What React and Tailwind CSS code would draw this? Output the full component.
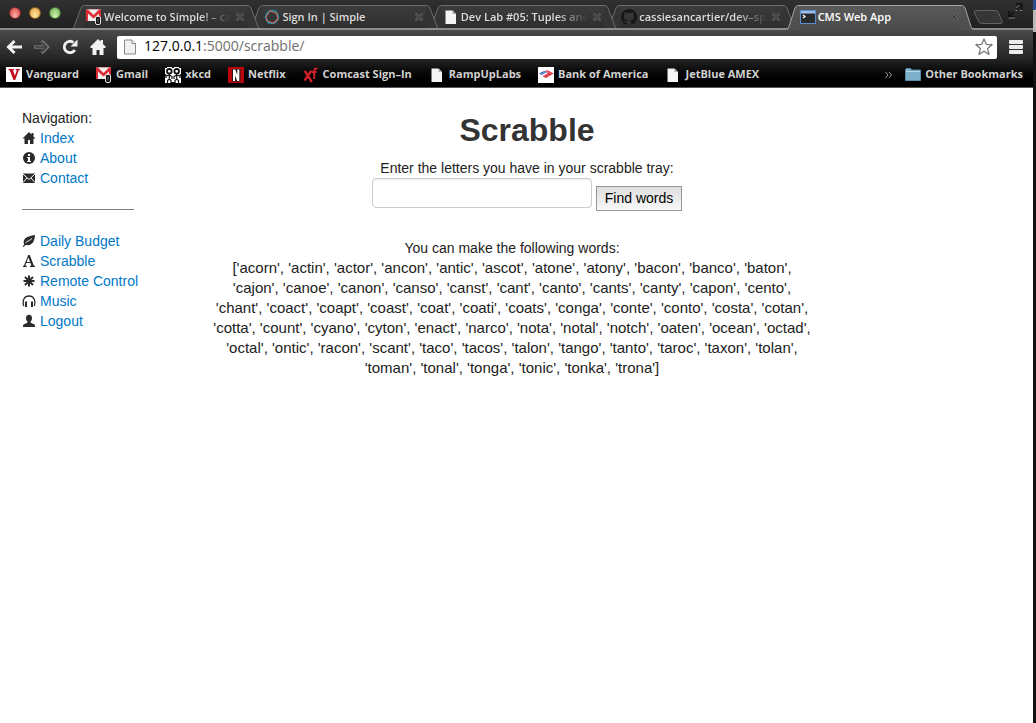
import React from "react";

function MailIcon() {
  return (
    <svg className="size-4 shrink-0" viewBox="0 0 16 16" aria-hidden="true">
      <rect x="0" y="0.500" width="15" height="11.500" fill="#f1eeee" />
      <path d="M0 .5h15V12h-2V4.500L7.500 9.500 2 4.500V12H0z" fill="#dc2b34" />
      <path d="M1.800.5h11.400L7.500 6z" fill="#f1eeee" />
      <rect x="9.500" y="7.500" width="5" height="8" rx="1.500" fill="#111" stroke="#e2e2e2" />
      <path d="M12 9.500v4" stroke="#777" />
    </svg>
  );
}

function PageIcon() {
  return (
    <svg className="size-4 shrink-0" viewBox="0 0 16 16" aria-hidden="true">
      <path d="M2.500 1.500h7L13 5v10H2.500z" fill="#f4f4f4" />
      <path d="M9.500 1.500V5H13z" fill="#aaa" />
    </svg>
  );
}

function SimpleIcon() {
  return (
    <svg className="size-4 shrink-0" viewBox="0 0 16 16" fill="none" strokeLinejoin="round" aria-hidden="true">
      <path d="M5 2h6.500L14.500 8l-3.500 6H4.500L1.500 8z" stroke="#12809a" strokeWidth="1.800" />
      <path d="M8 1.300 13.700 4.500v6.800L8 14.700l-5.700-3.400V4.500z" stroke="#1d93a8" strokeWidth="1.200" />
      <path d="M2 7.500 6 2l6.500 2 1.500 6-4.500 4L3 12z" stroke="#d8604f" strokeWidth="1.100" />
    </svg>
  );
}

function OctocatIcon() {
  return (
    <svg className="size-4 shrink-0" viewBox="0 0 16 16" fill="#171717" aria-hidden="true">
      <path d="M8 0C3.580 0 0 3.580 0 8c0 3.540 2.290 6.530 5.470 7.590.4.070.55-.17.55-.38 0-.19-.01-.82-.01-1.490-2.010.37-2.530-.49-2.690-.94-.09-.23-.48-.94-.82-1.130-.28-.15-.68-.52-.01-.53.63-.01 1.080.58 1.230.82.72 1.210 1.870.87 2.330.66.07-.52.28-.87.51-1.070-1.780-.2-3.640-.89-3.640-3.950 0-.87.31-1.590.82-2.150-.08-.2-.36-1.020.08-2.120 0 0 .67-.21 2.200.82a7.600 7.600 0 0 1 4 0c1.530-1.040 2.200-.82 2.200-.82.44 1.100.16 1.920.08 2.120.51.56.82 1.270.82 2.150 0 3.070-1.870 3.750-3.650 3.950.29.25.54.73.54 1.480 0 1.070-.01 1.930-.01 2.200 0 .21.15.46.55.38A8.010 8.010 0 0 0 16 8c0-4.420-3.580-8-8-8z" />
    </svg>
  );
}

function ConsoleIcon() {
  return (
    <svg className="size-4 shrink-0" viewBox="0 0 16 16" aria-hidden="true">
      <rect x="0.500" y="1.500" width="15" height="13" fill="#2a2c30" stroke="#5b8ccb" />
      <rect x="1" y="2" width="14" height="2.500" fill="#9cc0ee" />
      <path d="M3 6 5 7.500 3 9" fill="none" stroke="#fff" strokeWidth="1.200" />
    </svg>
  );
}

function VanguardIcon() {
  return (
    <svg className="size-4 shrink-0" viewBox="0 0 16 16" aria-hidden="true">
      <rect width="16" height="15" fill="#fff" />
      <path d="M2.500 2H8v1l-1 .3 1.900 5.500 1.900-5.500L9.800 3V2h4v1l-1 .3L9.200 13H7.500L3.700 3.300 2.500 3z" fill="#c20e1a" />
    </svg>
  );
}

function XkcdIcon() {
  return (
    <svg className="size-4 shrink-0" viewBox="0 0 16 16" aria-hidden="true">
      <rect width="16" height="16" fill="#fff" />
      <path d="M0 0h2v1H0zM14 0h2v1h-2zM0 7h1v2H0zM15 7h1v2h-1zM7 0h2v1H7zM6 15h4v1H6z" fill="#111" />
      <g fill="none" stroke="#111">
        <circle cx="4.300" cy="4.300" r="2.300" strokeWidth="1.800" />
        <circle cx="11.700" cy="4.300" r="2.300" strokeWidth="1.800" />
        <path d="M4.300 7v5M11.700 7v5M1 11V9l3.300-1L7 9.500V12M9 12V9.500L11.700 8 15 9v2M2.500 16v-2.500l1.800-1.500L6 13.500V16M10 16v-2.500l1.700-1.500 1.800 1.500V16" strokeWidth="1.200" />
      </g>
    </svg>
  );
}

function NetflixIcon() {
  return (
    <svg className="size-4 shrink-0" viewBox="0 0 16 16" aria-hidden="true">
      <rect width="16" height="16" fill="#b8060f" />
      <path d="M4 2h8.500v12.500H4z" fill="#2c1515" />
      <path d="M5 2.500h2.200L9.300 8V2.500h2V14H9.200L7 8.500V14H5z" fill="#fff" />
    </svg>
  );
}

function XfinityIcon() {
  return (
    <svg className="size-4 shrink-0" viewBox="0 0 16 16" fill="none" stroke="#d2202a" aria-hidden="true">
      <path d="M1.800 3.800 8.800 15M8.300 3.800 1.500 13.500" strokeWidth="2.400" />
      <path d="M14.500 1.600c-2.500-.5-3.300.4-3.300 2.400v8M9 5h4.500" strokeWidth="2" />
    </svg>
  );
}

function BankIcon() {
  return (
    <svg className="size-4 shrink-0" viewBox="0 0 16 16" aria-hidden="true">
      <rect width="16" height="16" fill="#fff" />
      <path d="M1 6.500 6 4l3 1-5.500 3z" fill="#2861b8" />
      <path d="M7 4 9.500 3.200l6 3.300-7.500 4.500-3.500-2 5.500-3z" fill="#d8202f" />
      <path d="m2.500 6 6 3.300M5 5l6 3.500M8.500 4l5 3" stroke="#fff" strokeWidth="0.500" />
    </svg>
  );
}

function FolderIcon() {
  return (
    <svg className="size-4 shrink-0" viewBox="0 0 16 16" aria-hidden="true">
      <path d="M0.500 13.500V2.500l1-1h4l1 1.500h9v10.500z" fill="#7eafc9" stroke="#5b8dab" />
      <path d="M1 4.500h14" stroke="#b9d8e8" />
    </svg>
  );
}

function ActiveTabEdge({ flip }) {
  return (
    <svg
      className={flip ? "h-[25px] w-3 shrink-0 -scale-x-100" : "h-[25px] w-3 shrink-0"}
      viewBox="0 0 12 25"
      aria-hidden="true"
    >
      <path d="M0 25Q1.500 24 2 22L8 3Q9 .5 12 .5V25z" fill="#505050" />
      <path d="M0 24Q1.300 23.500 2 21.500L8 3Q9 .5 12 .5" fill="none" stroke="#a8a8a8" />
    </svg>
  );
}

function TabEdge({ flip }) {
  return (
    <svg
      className={flip ? "h-[23px] w-3 shrink-0 -scale-x-100" : "h-[23px] w-3 shrink-0"}
      viewBox="0 0 12 23"
      aria-hidden="true"
    >
      <path d="M.5 23 8 3Q9 .5 12 .5V23z" fill="#343434" />
      <path d="M.5 23 8 3Q9 .5 12 .5" fill="none" stroke="#6c6c6c" />
    </svg>
  );
}

function Tab({ icon, title, active, fade }) {
  const Edge = active ? ActiveTabEdge : TabEdge;
  return (
    <div className={active ? "relative z-10 -mr-2 flex min-w-0 flex-1" : "-mr-2 flex min-w-0 flex-1"}>
      <Edge />
      <div
        className={
          active
            ? "flex h-[25px] min-w-0 flex-1 items-center border-t border-[#a8a8a8] bg-linear-to-b from-[#5a5a5a] to-[#4a4a4a] pb-0.5"
            : "flex h-[23px] min-w-0 flex-1 items-center border-t border-[#6c6c6c] bg-linear-to-b from-[#3c3c3c] to-[#2e2e2e]"
        }
      >
        <button
          type="button"
          className={
            active
              ? "flex min-w-0 flex-1 items-center gap-0.5 pl-px text-white"
              : "flex min-w-0 flex-1 items-center gap-0.5 pl-px text-[#dcdcdc]"
          }
        >
          {icon}
          <span
            className={
              fade
                ? "min-w-0 flex-1 overflow-hidden text-left whitespace-nowrap mask-r-from-75% mask-r-to-100%"
                : "min-w-0 flex-1 overflow-hidden text-left whitespace-nowrap"
            }
          >
            {title}
          </span>
        </button>
        <button type="button" aria-label="Close tab" className="mr-0.5 ml-1 shrink-0">
          <svg className="size-2.5" viewBox="0 0 10 10" fill="none" aria-hidden="true">
            <path d="m1.500 1.500 7 7m0-7-7 7" stroke="#777" strokeWidth="2.400" />
            <path d="m1.500 1.500 7 7m0-7-7 7" stroke="#3a3a3a" strokeWidth="1.200" />
          </svg>
        </button>
      </div>
      <Edge flip />
    </div>
  );
}

const tabs = [
  { title: "Welcome to Simple! – caro", icon: <MailIcon />, fade: true },
  { title: "Sign In | Simple", icon: <SimpleIcon /> },
  { title: "Dev Lab #05: Tuples and", icon: <PageIcon />, fade: true },
  { title: "cassiesancartier/dev–spr", icon: <OctocatIcon />, fade: true },
  { title: "CMS Web App", icon: <ConsoleIcon />, active: true },
];

const bookmarks = [
  { title: "Vanguard", icon: <VanguardIcon /> },
  { title: "Gmail", icon: <MailIcon /> },
  { title: "xkcd", icon: <XkcdIcon /> },
  { title: "Netflix", icon: <NetflixIcon /> },
  { title: "Comcast Sign–In", icon: <XfinityIcon /> },
  { title: "RampUpLabs", icon: <PageIcon /> },
  { title: "Bank of America", icon: <BankIcon /> },
  { title: "JetBlue AMEX", icon: <PageIcon /> },
];

function TitleBar() {
  return (
    <div className="flex h-[30px] border-b-2 border-[#8c8c8c] bg-linear-to-b from-[#303030] to-[#202020] text-[11px] font-semibold">
      <div className="flex w-[73px] shrink-0 gap-2 pt-[7px] pl-[9px]">
        <button type="button" aria-label="Close window" className="size-3 rounded-full border border-[#7c2a2a] bg-radial-[at_50%_80%] from-[#ffb0a8] to-[#d63c3c]" />
        <button type="button" aria-label="Minimize window" className="size-3 rounded-full border border-[#8a5a20] bg-radial-[at_50%_80%] from-[#ffe9a0] to-[#e09838]" />
        <button type="button" aria-label="Zoom window" className="size-3 rounded-full border border-[#3f6e35] bg-radial-[at_50%_80%] from-[#d0f5b0] to-[#6aac50]" />
      </div>
      <div className="flex min-w-0 flex-1 items-start pt-[5px] pr-2">
        {tabs.map((tab) => (
          <Tab key={tab.title} {...tab} />
        ))}
      </div>
      <button type="button" aria-label="New tab" className="mt-[9px] h-4 w-[31px] shrink-0">
        <svg className="h-4 w-[31px]" viewBox="0 0 31 16" aria-hidden="true">
          <path d="M2.500 1.500h20q2 0 3 2.500l3.500 8q1 2.500-1.500 2.500H8.500q-2 0-3-2.500L1.500 4Q.5 1.500 2.500 1.500z" fill="#363636" stroke="#626262" />
        </svg>
      </button>
      <button type="button" aria-label="Full screen" className="mt-[3px] mr-2.5 ml-1 h-4 w-[15px] shrink-0">
        <svg className="h-4 w-[15px]" viewBox="0 0 15 16" fill="none" aria-hidden="true">
          <path d="M8 1h6v6M13.500 1.500 9 6M1 8v6h6M1.500 13.500 6 9" stroke="#111" strokeWidth="1.600" />
          <path d="M7.500 7.500h2M12 7.500h2.500M.5 15H7M8.500 5l3-3" stroke="#808080" />
        </svg>
      </button>
    </div>
  );
}

function Toolbar() {
  return (
    <div className="flex h-[30px] items-center bg-linear-to-b from-[#4a4a4a] to-[#242424] pt-1 pr-2.5 pl-1.5">
      <button type="button" aria-label="Back" className="mr-3">
        <svg className="size-4" viewBox="0 0 16 16" fill="none" stroke="#f2f2f2" strokeWidth="3" aria-hidden="true">
          <path d="M2.500 8H16M8.500 2 2.500 8l6 6" />
        </svg>
      </button>
      <button type="button" aria-label="Forward" className="mr-3">
        <svg className="size-4" viewBox="0 0 16 16" fill="none" aria-hidden="true">
          <path d="M0 8h13.500M7.500 2l6 6-6 6" stroke="#747474" strokeWidth="3.400" />
          <path d="M1 8h12M7.500 3l5 5-5 5" stroke="#3c3c3c" strokeWidth="1.600" />
        </svg>
      </button>
      <button type="button" aria-label="Reload" className="mr-3">
        <svg className="size-4" viewBox="0 0 16 16" fill="none" aria-hidden="true">
          <path d="M12.800 11A5.700 5.700 0 1 1 11.500 3.500" stroke="#f2f2f2" strokeWidth="2.800" />
          <path d="M15.500.5v7h-7z" fill="#f2f2f2" />
        </svg>
      </button>
      <button type="button" aria-label="Home" className="mr-[11px]">
        <svg className="size-4" viewBox="0 0 16 16" fill="#f2f2f2" aria-hidden="true">
          <path d="M8 0 0 8l1 1h1.500v7h4v-5h3v5h4V9H15l1-1-3-3V1h-2.500v1.500z" />
        </svg>
      </button>
      <div className="flex h-[23px] flex-1 items-center rounded-xs bg-white pr-1 pl-1.5">
        <svg className="h-4 w-[14px]" viewBox="0 0 14 16" aria-hidden="true">
          <path d="M1.500 1h7.500l3.500 3.500V15h-11z" fill="#f0f0f0" stroke="#8a8a8a" />
          <path d="M9 1v3.500h3.500" fill="#fff" stroke="#8a8a8a" />
        </svg>
        <a href="http://127.0.0.1:5000/scrabble/" className="ml-[7px] flex-1 pb-0.5 text-sm leading-5 text-[#6e6e6e]">
          <span className="text-black">127.0.0.1</span>:5000/scrabble/
        </a>
        <button type="button" aria-label="Bookmark this page">
          <svg className="size-[18px]" viewBox="0 0 20 20" fill="#fff" stroke="#777" strokeWidth="1.400" strokeLinejoin="round" aria-hidden="true">
            <path d="m10 1 2.500 6 6.500.5-5 4.200 1.600 6.500L10 14.800l-5.600 3.400L6 11.700 1 7.500 7.500 7z" />
          </svg>
        </button>
      </div>
      <button type="button" aria-label="Menu" className="ml-3">
        <svg className="h-4 w-3.5" viewBox="0 0 14 16" fill="#ececec" aria-hidden="true">
          <rect y="1" width="14" height="4" rx="1" />
          <rect y="6" width="14" height="4" rx="1" />
          <rect y="11" width="14" height="4" rx="1" />
        </svg>
      </button>
    </div>
  );
}

function BookmarksBar() {
  return (
    <div className="flex h-7 items-center gap-[17px] border-b border-[#555] bg-linear-to-b from-[#222] to-black pt-0.5 pr-2.5 pl-1.5 text-[11px] font-bold text-[#d2d2d2]">
      {bookmarks.map((b) => (
        <a key={b.title} href="#" className="flex items-center gap-1 whitespace-nowrap">
          {b.icon}
          {b.title}
        </a>
      ))}
      <button type="button" aria-label="More bookmarks" className="ml-auto">
        <svg className="h-2 w-[7px]" viewBox="0 0 7 8" fill="none" stroke="#999" aria-hidden="true">
          <path d="m.5 1 2.500 3L.5 7M4 1l2.500 3L4 7" />
        </svg>
      </button>
      <a href="#" className="-ml-1 flex items-center gap-1 whitespace-nowrap">
        <FolderIcon />
        Other Bookmarks
      </a>
    </div>
  );
}

function Glyph({ children }) {
  return (
    <svg className="size-3.5 shrink-0" viewBox="0 0 14 14" fill="#2b2b2b" aria-hidden="true">
      {children}
    </svg>
  );
}

const mainLinks = [
  { title: "Index", glyph: <path d="M7 1 .5 7.500h2V13H6V9h2v4h3.500V7.500h2L11.500 5.500V2h-2v1.500z" /> },
  {
    title: "About",
    glyph: (
      <>
        <circle cx="7" cy="7" r="6" />
        <path d="M6 3h2v2H6zM5 6h3v4h1v1H5v-1h1V7H5z" fill="#fff" />
      </>
    ),
  },
  {
    title: "Contact",
    glyph: (
      <>
        <path d="M1 2.500h12V12H1z" />
        <path d="m1 3 6 5.500L13 3M1 11.500 5 7M13 11.500 9 7" fill="none" stroke="#fff" />
      </>
    ),
  },
];

const appLinks = [
  {
    title: "Daily Budget",
    glyph: (
      <>
        <path d="M13 1C8 2 3 2.500 1.800 7c-.3 1.500 0 2.500.4 3.300L.8 12.500l1 .5 1.600-2C10 12 12.500 8 13 1z" />
        <path d="M3.500 9C5 7 8 6.500 10 4.500" fill="none" stroke="#fff" strokeWidth="0.900" />
      </>
    ),
  },
  {
    title: "Scrabble",
    glyph: (
      <path
        fillRule="evenodd"
        d="M6.300 1h1.500l4 10.500 1.200.5v1H8v-1l1.300-.4L8.500 9H4.300l-.9 2.600 1.300.4v1H1v-1l1-.5zM4.700 8h3.400L6.300 3.600z"
      />
    ),
  },
  {
    title: "Remote Control",
    glyph: <path d="M7 1.500v11M1.500 7h11M3 3l8 8M11 3l-8 8" fill="none" stroke="#2b2b2b" strokeWidth="2" />,
  },
  {
    title: "Music",
    glyph: (
      <>
        <path d="M1.700 12C0 6 2.500 2 7 2s7 4 5.300 10" fill="none" stroke="#2b2b2b" strokeWidth="1.300" />
        <path d="M3 7.500h2V13H3zM9 7.500h2V13H9z" />
      </>
    ),
  },
  {
    title: "Logout",
    glyph: <path d="M7 .8c2 0 3 1.400 3 3.200 0 1.500-.5 2.500-1.300 3.300v1.500l3.300 1.400c.8.400 1 1 1 2.800H1c0-1.800.2-2.400 1-2.800l3.300-1.400V7.300C4.500 6.500 4 5.500 4 4 4 2.200 5 .8 7 .8z" />,
  },
];

function NavList({ links }) {
  return (
    <ul>
      {links.map((link) => (
        <li key={link.title} className="flex items-center gap-1">
          <Glyph>{link.glyph}</Glyph>
          <a href="#" className="whitespace-nowrap text-[#0078c8]">
            {link.title}
          </a>
        </li>
      ))}
    </ul>
  );
}

const words =
  "acorn actin actor ancon antic ascot atone atony bacon banco baton cajon canoe canon canso canst cant canto cants canty capon cento chant coact coapt coast coat coati coats conga conte conto costa cotan cotta count cyano cyton enact narco nota notal notch oaten ocean octad octal ontic racon scant taco tacos talon tango tanto taroc taxon tolan toman tonal tonga tonic tonka trona".split(
    " "
  );

const wordList = `[${words.map((w) => `'${w}'`).join(", ")}]`;

function ScrabblePage() {
  return (
    <div className="flex flex-1 bg-white pt-5 font-['Liberation_Sans',Arial,sans-serif] text-sm leading-5 text-[#222]">
      <nav className="w-[205px] shrink-0 pl-[22px]">
        <p>Navigation:</p>
        <NavList links={mainLinks} />
        <hr className="my-[21px] w-28 border-[#808080]" />
        <NavList links={appLinks} />
      </nav>
      <main className="max-w-[614px] flex-1 text-center">
        <form className="pl-[30px]" onSubmit={(e) => e.preventDefault()}>
          <h1 className="pt-0.5 pb-2 text-[32px] leading-10 font-bold text-[#333]">Scrabble</h1>
          <label htmlFor="letters" className="block">
            Enter the letters you have in your scrabble tray:
          </label>
          <div className="flex items-start justify-center gap-1">
            <input
              id="letters"
              type="text"
              className="h-[30px] w-[220px] rounded-sm border border-[#ccc] px-1.5 shadow-[inset_0_1px_1px_rgba(0,0,0,0.075)]"
            />
            <button
              type="submit"
              className="mt-2 h-[25px] border border-[#979797] bg-linear-to-b from-[#dedede] to-[#f8f8f8] px-2 pb-0.5 text-black"
            >
              Find words
            </button>
          </div>
        </form>
        <p className="mt-[27px]">You can make the following words:</p>
        <p className="px-1.5 text-[15px] leading-5">{wordList}</p>
      </main>
    </div>
  );
}

export default function App() {
  return (
    <div className="flex min-h-screen bg-[#11120f]">
      <div className="flex min-w-0 flex-1 flex-col">
        <header className="font-['Open_Sans','Noto_Sans',sans-serif]">
          <TitleBar />
          <Toolbar />
          <BookmarksBar />
        </header>
        <ScrabblePage />
      </div>
      <div className="w-[3px] shrink-0" aria-hidden="true">
        <div className="h-2.5 bg-[#2f4f8c]" />
        <div className="h-[22px] bg-[#b8b8b8]" />
      </div>
    </div>
  );
}
